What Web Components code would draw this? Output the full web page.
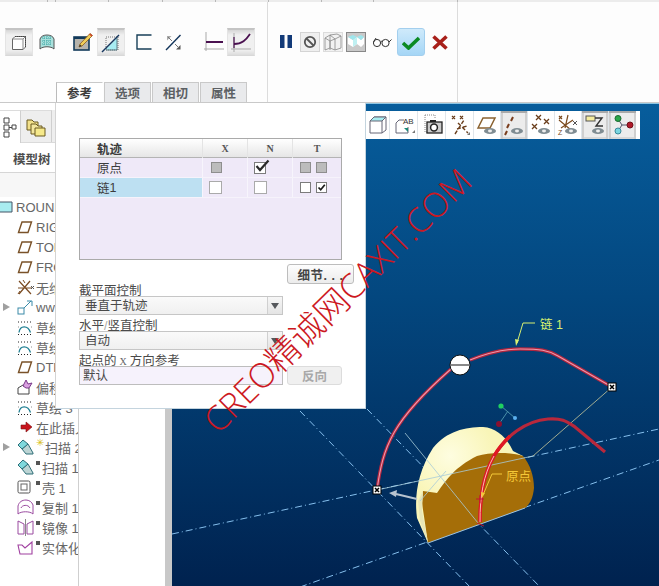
<!DOCTYPE html>
<html lang="zh">
<head>
<meta charset="utf-8">
<title>CAD</title>
<style>
  html, body { margin: 0; padding: 0; background: #fff; }
  body { width: 659px; height: 586px; overflow: hidden; font-family: "Liberation Sans", "Noto Sans CJK SC", sans-serif; }
</style>
</head>
<body>
<cad-app></cad-app>

<script>
"use strict";

const CJK = `"Liberation Sans", "Noto Sans CJK SC", sans-serif`;
const SERIF = `"Liberation Serif", "Noto Sans CJK SC", serif`;

// every element gets its markup and style from one template
function define(tag, css, html) {
  const template = document.createElement("template");
  template.innerHTML = `<style>${css}</style>${html}`;
  customElements.define(tag, class extends HTMLElement {
    constructor() {
      super();
      this.attachShadow({ mode: "open" });
      this.shadowRoot.appendChild(template.content.cloneNode(true));
    }
  });
}

function svg(w, h, body, style = "") {
  return `<svg width="${w}" height="${h}" viewBox="0 0 ${w} ${h}" style="display:block;${style}">${body}</svg>`;
}

/* ---------- small parts ---------- */

define("rib-btn", `
  :host { display: flex; align-items: center; justify-content: center; width: 28px; height: 28px; flex: none; box-sizing: border-box; }
  :host([active]) { background: linear-gradient(#d6d6d6, #f0f0f0 20%, #f0f0f0 80%, #dcdcdc); border-top: 2px solid #c4c4c4; border-left: 1px solid #e4e4e4; border-right: 1px solid #e4e4e4; border-bottom: 1px solid #d8d8d8; }
`, `<slot></slot>`);

define("tool-btn", `
  :host { display: flex; align-items: center; justify-content: center; width: 27px; height: 28px; box-sizing: border-box; border-right: 1px solid #dfe5ea; flex: none; }
  :host([active]) { background: #ececec; box-shadow: inset 0 2px 0 #aaa, inset 2px 0 0 #cfcfcf, inset -2px 0 0 #cfcfcf, inset 0 -2px 0 #d8d8d8; }
`, `<slot></slot>`);

define("cad-tab", `
  :host { display: flex; align-items: center; justify-content: center; width: 47px; height: 20px; box-sizing: border-box; margin-right: 1px; background: #e9eaec; border: 1px solid #c9c9c9; border-bottom: 0; font: bold 12.5px ${CJK}; color: #5c6064; }
  :host([active]) { background: #fff; color: #3c3c3c; border-left-color: #bbb; border-right-color: #fff; }
`, `<slot></slot>`);

define("tree-row", `
  :host { display: flex; align-items: center; height: 20px; white-space: nowrap; font: 13px ${CJK}; color: #666; }
  .gap { width: 10px; flex: none; }
  .icon { width: 17px; height: 18px; margin-left: 7px; margin-right: 2px; flex: none; display: flex; align-items: center; }
`, `<slot name="lead"><span class="gap"></span></slot><span class="icon"><slot name="icon"></slot></span><slot></slot>`);

define("cad-select", `
  :host { display: flex; width: 204px; height: 19px; box-sizing: border-box; border: 1px solid #c6c6c6; background: linear-gradient(#fafafa, #f0f0f0); font: 12.5px ${CJK}; color: #4a4a4a; line-height: 19px; }
  span { flex: 1; padding-left: 5px; height: 17px; }
  i { width: 14px; border-left: 1px solid #d0d0d0; display: flex; align-items: center; justify-content: center; background: linear-gradient(#f6f6f6, #e4e4e4); }
  i::after { content: ""; border: 4px solid transparent; border-top: 6px solid #55585c; border-bottom: 0; }
`, `<span><slot></slot></span><i></i>`);

define("cad-button", `
  :host { display: flex; align-items: center; justify-content: center; box-sizing: border-box; border: 1px solid #bdbdbd; border-radius: 3px; background: linear-gradient(#fdfdfd, #ececec); font: bold 12.5px ${CJK}; color: #444; }
  :host([disabled]) { border-color: #dcdcdc; background: #f0f0f0; color: #a8a8a8; }
`, `<slot></slot>`);

define("cad-check", `
  :host { display: block; width: 11px; height: 11px; box-sizing: border-box; border: 1px solid #7c7c7c; background: #fff; position: relative; flex: none; }
  :host([off]) { background: #bcbcbc; border-color: #8e8e8e; }
`, `<slot></slot>`);

const TICK = `<svg width="15" height="13" viewBox="0 0 15 13" style="position:absolute;left:0;top:-4px"><path d="M1.5 7 L5 11 L13.5 1.5" fill="none" stroke="#2a2a2a" stroke-width="2.2"/></svg>`;
const TINY_TICK = `<svg width="9" height="9" viewBox="0 0 9 9" style="position:absolute;left:0;top:0"><path d="M1.5 4.5 L3.7 6.8 L7.8 1.8" fill="none" stroke="#1a1a1a" stroke-width="1.7"/></svg>`;

/* ---------- ribbon ---------- */

define("ribbon-bar", `
  :host { display: flex; flex-direction: column; height: 103px; background: #fdfdfd; box-sizing: border-box; border-bottom: 1px solid #c9c9c9; }
  .strip { display: flex; height: 2px; background: #ececec; flex: none; }
  .strip b { display: block; border-right: 1px solid #b8b8b8; flex: none; }
  .groups { display: flex; flex: 1; }
  .g1 { width: 267px; border-right: 1px solid #dcdcdc; display: flex; flex-direction: column; }
  .g2 { width: 189px; border-right: 1px solid #dcdcdc; }
  .row { display: flex; align-items: center; height: 28px; margin-top: 26px; }
  .tabs { display: flex; margin-top: auto; margin-left: 56px; }
`, `
  <div class="strip"><b style="width:47px"></b><b style="width:7px"></b><b style="width:52px"></b><b style="width:53px"></b><b style="width:52px"></b><b style="width:52px"></b><b style="width:52px"></b><b style="width:51px"></b><b style="width:83px"></b></div>
  <div class="groups">
    <div class="g1">
      <div class="row">
        <rib-btn active style="margin-left:5px">${svg(16, 16, `<path d="M1.5 4 L4 1.5 H14.5 V12 L12 14.5 H1.5 Z" fill="#fff" stroke="#666" /><path d="M1.5 4 H12 V14.5 M12 4 L14.5 1.5" fill="none" stroke="#888"/><path d="M4 1.5 H14.5 V12" fill="none" stroke="#444" stroke-dasharray="1 1"/>`)}</rib-btn>
        <rib-btn style="margin-left:6px;width:16px">${svg(16, 17, `<path d="M1 15 V5 C2 2 5 1 8 1 C11 1 14 2 15 5 V15 C12 12 4 12 1 15 Z" fill="#a9e0dc" stroke="#555"/><path d="M3 4 H13 M3 7 H13 M3 10 H13 M5 2 V12 M8 2 V12 M11 2 V12" stroke="#3fa7a4" stroke-dasharray="1 1" fill="none"/>`)}</rib-btn>
        <rib-btn style="margin-left:14px;width:28px">${svg(21, 20, `<rect x="1" y="5" width="15" height="13" fill="#b7b4ac" stroke="#123a5a" stroke-width="1.6"/><rect x="1" y="5" width="15" height="2" fill="#123a5a"/><path d="M6 15 L7 12 L17 1.5 L19.5 3.5 L9 14 Z" fill="#f1cf5a" stroke="#8a5a1a" stroke-width=".8"/><path d="M16 2.5 L17 1.5 L19.5 3.5 L18.5 4.5 Z" fill="#d0402a"/><path d="M6 15 L7 12.6 L8.8 14 Z" fill="#333"/>`)}</rib-btn>
        <rib-btn active style="margin-left:0">${svg(20, 20, `<path d="M5 16 L16 5 V17 H5 Z" fill="#a8ecf2"/><path d="M5 4 H17 V17 H5 Z" fill="none" stroke="#777" stroke-dasharray="1 1"/><path d="M16 5 V17 H5" fill="none" stroke="#5a7a84"/><path d="M1 19 L18 2" stroke="#17375e" stroke-width="1.5"/>`)}</rib-btn>
        <rib-btn style="margin-left:11px;width:16px">${svg(16, 16, `<path d="M15.5 1 H1 V15 H15.5" fill="none" stroke="#173f58" stroke-width="1.4"/>`)}</rib-btn>
        <rib-btn style="margin-left:13px;width:17px">${svg(17, 17, `<path d="M1 16 L15.5 1" stroke="#12345a" stroke-width="1.4"/><path d="M2 2 L6.5 2 L2 6.5 Z" fill="#aaa"/><path d="M15.5 15.5 L11 15.5 L15.5 11 Z" fill="#555"/><path d="M3 3 L7 7 M14 14 L10 10" stroke="#777"/>`)}</rib-btn>
        <rib-btn style="margin-left:21px;width:22px">${svg(20, 20, `<path d="M2 0 V19 M0 17 H20" stroke="#a9a9a9" fill="none"/><path d="M2 10 H19" stroke="#4a1150" stroke-width="2"/>`)}</rib-btn>
        <rib-btn active style="margin-left:2px">${svg(20, 20, `<path d="M3 0 V19 M0 16 H20" stroke="#a9a9a9" fill="none"/><path d="M3 11 C11 11 15 7 19 1" fill="none" stroke="#4a1150" stroke-width="1.8"/><path d="M3 4 V15" stroke="#4a1150" stroke-width="1.2"/>`)}</rib-btn>
      </div>
      <div class="tabs">
        <cad-tab active>参考</cad-tab><cad-tab>选项</cad-tab><cad-tab>相切</cad-tab><cad-tab>属性</cad-tab>
      </div>
    </div>
    <div class="g2">
      <div class="row">
        <rib-btn style="margin-left:11px;width:13px">${svg(12, 14, `<rect x="0" y="0" width="4.5" height="13" fill="#123a78"/><rect x="7.5" y="0" width="4.5" height="13" fill="#123a78"/>`)}</rib-btn>
        <rib-btn style="margin-left:8px;width:20px;height:20px;background:#efefef;border:1px solid #d4d4d4">${svg(14, 14, `<circle cx="7" cy="7" r="5.2" fill="none" stroke="#555" stroke-width="1.8"/><path d="M3.5 3.5 L10.5 10.5" stroke="#555" stroke-width="1.8"/>`)}</rib-btn>
        <rib-btn style="margin-left:3px;width:20px;height:20px;background:#f2f2f2;border:1px solid #dcdcdc">${svg(18, 18, `<path d="M1 5 L6 2 V15 L1 17 Z M6 2 L11 6 V17 L6 15 M11 6 L17 3 V15 L11 17 M1 5 L6 8 V17 M6 8 L11 6 M6 2 L13 1 L17 3" fill="none" stroke="#888" stroke-width=".8"/>`)}</rib-btn>
        <rib-btn style="margin-left:3px;width:20px;height:20px;background:#c9c9c9;border:1px solid #888">${svg(18, 18, `<path d="M1 4 L6 7 V14 L1 11 Z M6 7 L10 4 L14 7 V14 L10 11 L6 14 Z M14 7 L17 4 V11 L14 14 Z" fill="#fff"/><path d="M1 4 L6 7 L10 4 L14 7 L17 4 L14 2 L10 4 L6 2 Z" fill="#9fe6ec"/><path d="M6 7 L6 14 L10 11 V4 Z" fill="#bff0f2"/>`)}</rib-btn>
        <rib-btn style="margin-left:6px;width:20px">${svg(20, 11, `<ellipse cx="5" cy="6" rx="3.6" ry="3.6" fill="#fff" stroke="#333"/><ellipse cx="13.5" cy="6" rx="3.6" ry="3.6" fill="#fff" stroke="#333"/><path d="M8.5 5 C9.5 4 9.8 4 10 5 M17 5 L19.5 2.5 M1.6 5 L4 1" fill="none" stroke="#333"/>`)}</rib-btn>
        <rib-btn style="margin-left:5px;background:linear-gradient(#cfeafb,#a5d6f6);border:1px solid #a3cfee;border-radius:3px">${svg(18, 15, `<path d="M1 8 L6.5 13 L17 3" fill="none" stroke="#0b8a22" stroke-width="3.6"/>`)}</rib-btn>
        <rib-btn style="margin-left:7px;width:16px">${svg(16, 15, `<path d="M1.5 1.5 L14.5 13.5 M14.5 1.5 L1.5 13.5" stroke="#a8201a" stroke-width="3.6"/>`)}</rib-btn>
      </div>
    </div>
  </div>
`);

/* ---------- model tree ---------- */

const PLANE = svg(16, 14, `<path d="M1.5 12.5 L5 2 H14.5 L11 12.5 Z" fill="none" stroke="#7a5228" stroke-width="1.4"/>`);
const SKETCH = svg(16, 15, `<path d="M2 12.5 C3 5 11 5 13.5 12.5" fill="none" stroke="#1f7f92" stroke-width="1.3"/><path d="M1 2 H14 M1 7 H1.5 M14 7 H14.5" stroke="#222" stroke-dasharray="1 2" fill="none"/><path d="M1 14.5 H14" stroke="#222" stroke-dasharray="1 2"/>`);
const SWEEP = svg(17, 16, `<path d="M5 10 L11 5 L16 14 V15 L9 15 Z" fill="#bcd4d4" stroke="#2f6f78"/><path d="M1 6 L6 1 L11 5 L5 10 Z" fill="#7ed8dc" stroke="#2f6f78"/>`);
const MARK = `<i style="display:block;flex:none;width:4px;height:4px;background:#555;margin:0 2px 8px 0"></i>`;

define("model-tree", `
  :host { display: flex; flex-direction: column; width: 79px; box-sizing: border-box; flex: none; overflow: hidden; background: #fff; border-right: 1px solid #cfcfcf; }
  .tabs { display: flex; height: 40px; box-sizing: border-box; padding-top: 7px; border-bottom: 1px solid #dadada; }
  .tabs div { display: flex; align-items: center; justify-content: center; box-sizing: border-box; }
  .t1 { width: 21px; margin-bottom: -1px; background: #fff; border-right: 1px solid #cfcfcf; border-top: 1px solid #dcdcdc; }
  .t2 { width: 31px; background: #eee; border-right: 1px solid #cfcfcf; border-top: 1px solid #dcdcdc; }
  .t3 { width: 24px; background: #eee; }
  .title { height: 30px; display: flex; align-items: center; padding: 2px 0 0 13px; box-sizing: border-box; font: bold 12.5px ${CJK}; color: #4c4c4c; border-bottom: 1px solid #d6d6d6; }
  .blank { height: 24px; flex: none; background: #f7f7f7; }
  .arrow { display: block; flex: none; width: 0; height: 0; border: 4px solid transparent; border-left: 7px solid #a0a0a0; border-right: 0; margin: 0 0 0 3px; }
`, `
  <div class="tabs">
    <div class="t1">${svg(16, 22, `<path d="M2 2 H7 V7 H2 Z M2 9 H7 V14 H2 Z M2 16 H7 V21 H2 Z M10 9 H14 V13 H10 Z M7 11.5 H10" fill="#fff" stroke="#444"/>`)}</div>
    <div class="t2">${svg(20, 20, `<path d="M1 3 H6 L8 5 H12 V13 H1 Z" fill="#f2e08a" stroke="#6a5a20"/><path d="M5 7 H10 L12 9 H16 V17 H5 Z" fill="#f3e69e" stroke="#6a5a20"/><path d="M9 11 H19 V19 H9 Z" fill="#f6e98a" stroke="#6a5a20"/>`)}</div>
    <div class="t3"></div>
  </div>
  <div class="title">模型树</div>
  <div class="blank"></div>
  <tree-row style="margin-left:-20px"><span slot="icon">${svg(16, 12, `<path d="M1 1 H15 V11 H1 Z" fill="#a8ecf0" stroke="#456"/>`)}</span>ROUND1</tree-row>
  <tree-row><span slot="icon">${PLANE}</span>RIGHT</tree-row>
  <tree-row><span slot="icon">${PLANE}</span>TOP</tree-row>
  <tree-row><span slot="icon">${PLANE}</span>FRONT</tree-row>
  <tree-row><span slot="icon">${svg(17, 17, `<path d="M2 2 L14 15 M13 2 L2 15 M1 9 H15" stroke="#7a4a20" stroke-width="1.2"/><path d="M6 1 L8 4 M3 12 L1 15" stroke="#7a4a20"/><path d="M14 7 L17 10 M17 7 L14 10" stroke="#555"/>`)}</span>无维度</tree-row>
  <tree-row><span slot="lead" class="arrow"></span><span slot="icon">${svg(17, 15, `<rect x="1" y="8" width="6" height="6" fill="#fff" stroke="#3a8aa8"/><path d="M7 8 L14 1 M10 1 H15 V6" fill="none" stroke="#3a8aa8"/>`)}</span>wwv</tree-row>
  <tree-row><span slot="icon">${SKETCH}</span>草绘 1</tree-row>
  <tree-row><span slot="icon">${SKETCH}</span>草绘 2</tree-row>
  <tree-row><span slot="icon">${PLANE}</span>DTM1</tree-row>
  <tree-row><span slot="icon">${svg(17, 17, `<path d="M1 9 L6 6 L12 9 V15 H1 Z" fill="#fff" stroke="#444"/><path d="M6 7 L9 1 L11 5 L15 4 L12 9 L9 9 Z" fill="#d9a0e0" stroke="#7a3a8a"/>`)}</span>偏移 1</tree-row>
  <tree-row><span slot="icon">${SKETCH}</span>草绘 3</tree-row>
  <tree-row><span slot="icon">${svg(16, 12, `<path d="M4 4 H9 V1 L15 6 L9 11 V8 H4 Z" fill="#c8141c" stroke="#7a1010" stroke-width=".6"/>`)}</span>在此插入</tree-row>
  <tree-row><span slot="lead" class="arrow"></span><span slot="icon">${SWEEP}</span><span style="flex:none;color:#d8c020;font-size:10px;line-height:10px;margin:0 1px 8px 0">✳</span>扫描 2</tree-row>
  <tree-row><span slot="icon">${SWEEP}</span>${MARK}扫描 1</tree-row>
  <tree-row><span slot="icon">${svg(14, 14, `<rect x="1" y="1" width="12" height="12" rx="1.5" fill="#fff" stroke="#555"/><rect x="4" y="4" width="6" height="6" fill="#fff" stroke="#666"/>`)}</span>${MARK}壳 1</tree-row>
  <tree-row><span slot="icon">${svg(17, 17, `<path d="M1 15 V7 C2 3 5 1 9 1 C12 1 15 3 16 6 V15 C13 12 4 12 1 15 Z" fill="#fff" stroke="#9a4aa0"/><path d="M4 9 C5 6 11 5 13 9" fill="none" stroke="#9a4aa0"/>`)}</span>${MARK}复制 1</tree-row>
  <tree-row><span slot="icon">${svg(17, 17, `<path d="M1 2 L7 5 V15 H1 Z M16 2 L10 5 V15 H16 Z" fill="#fff" stroke="#9a4aa0"/><path d="M8.5 0 V17" stroke="#8a8a8a"/>`)}</span>${MARK}镜像 1</tree-row>
  <tree-row><span slot="icon">${svg(17, 15, `<path d="M1 5 L5 5 L8 8 L15 2 V14 H3 Z" fill="#fff" stroke="#a040a0" stroke-width="1.1"/>`)}</span>${MARK}实体化</tree-row>
`);

/* ---------- dialog ---------- */

define("traj-table", `
  :host { display: block; width: 263px; height: 122px; box-sizing: border-box; border: 1px solid #aaa; background: #efe9f8; font: 12.5px ${CJK}; color: #3c3c3c; }
  .row { display: grid; grid-template-columns: 123px 45px 45px 1fr; height: 20px; box-sizing: border-box; border-bottom: 1px solid #f6f3fb; align-items: center; }
  .row > div { height: 100%; display: flex; align-items: center; box-sizing: border-box; border-right: 1px solid #f7f5fc; }
  .row > div:last-child { border-right: 0; }
  .head { height: 19px; background: linear-gradient(#fff, #e6e6e6); border-bottom: 1px solid #b4b4b4; font-weight: bold; }
  .head > div { border-right-color: #e4e4e4; }
  .head .n { font: bold 10px ${SERIF}; color: #555; justify-content: center; }
  .first { padding-left: 17px; }
  .c { padding-left: 6px; gap: 5px; }
  .sel { background: #bde0f2; }
`, `
  <div class="row head"><div class="first">轨迹</div><div class="n">X</div><div class="n">N</div><div class="n">T</div></div>
  <div class="row">
    <div class="first">原点</div>
    <div class="c" style="padding-left:8px"><cad-check off></cad-check></div>
    <div class="c"><cad-check style="width:12px;height:12px">${TICK}</cad-check></div>
    <div class="c" style="padding-left:7px"><cad-check off></cad-check><cad-check off></cad-check></div>
  </div>
  <div class="row">
    <div class="first sel">链<span style="font:10px ${SERIF};margin-left:9px;color:#567">1</span></div>
    <div class="c"><cad-check style="width:13px;height:13px;border-color:#aaa"></cad-check></div>
    <div class="c"><cad-check style="width:13px;height:13px;border-color:#aaa"></cad-check></div>
    <div class="c" style="padding-left:7px"><cad-check></cad-check><cad-check>${TINY_TICK}</cad-check></div>
  </div>
`);

define("sweep-dialog", `
  :host { display: block; width: 311px; height: 306px; box-sizing: border-box; background: #fff; border-right: 1px solid #c4d4de; border-bottom: 1px solid #c4d4de; border-left: 1px solid #d4d4d4; padding: 35px 0 0 23px; font: 12.5px ${CJK}; color: #4a4a4a; }
  .btn-row { display: flex; height: 20px; margin-top: 4px; margin-bottom: -4px; padding-left: 208px; }
  .lab { height: 13px; line-height: 16px; white-space: nowrap; margin-top: 3px; }
  .n { font: 10px ${SERIF}; color: #666; margin: 0 3px; }
  .lt { color: #aaa; }
  .line { display: flex; gap: 4px; }
  .input { width: 204px; height: 19px; box-sizing: border-box; border: 1px solid #bdbdbd; background: #f6f2fc; padding-left: 3px; line-height: 19px; }
`, `
  <traj-table></traj-table>
  <div class="btn-row"><cad-button style="width:67px;letter-spacing:.5px">细节. . .</cad-button></div>
  <div class="lab">截平面控制</div>
  <cad-select>垂直于轨迹</cad-select>
  <div class="lab">水平<span class="lt">/</span>竖直控制</div>
  <cad-select>自动</cad-select>
  <div class="lab">起点的<span class="n">X</span>方向参考</div>
  <div class="line"><div class="input">默认</div><cad-button disabled style="width:55px;height:19px">反向</cad-button></div>
`);

/* ---------- view toolbar ---------- */

const EYE = `<ellipse cx="14" cy="17" rx="6" ry="3" fill="#7f8c92"/><ellipse cx="14" cy="17" rx="2" ry="1.4" fill="#eee"/>`;

define("view-toolbar", `
  :host { display: flex; width: 274px; height: 28px; background: #fff; box-sizing: border-box; padding-right: 4px; }
`, `
  <tool-btn style="width:24px">${svg(20, 20, `<path d="M2 6 L6 2 H18 V15 L14 18 H2 Z" fill="#fff" stroke="#667"/><path d="M2 6 L6 2 H18 L14 6 Z" fill="#a8ecf0" stroke="#667"/><path d="M14 6 V18 M14 6 L18 2" stroke="#667" fill="none"/>`)}</tool-btn>
  <tool-btn style="width:28px">${svg(22, 20, `<path d="M3 8 L6 5 H11 M3 8 V18 H15 V12" fill="none" stroke="#667"/><text x="10" y="9" font-size="8" font-family="Liberation Sans" fill="#333">AB</text><path d="M11 13 H15 V17 Z" fill="#1c8a78"/><path d="M19 18 H22 V15 Z" fill="#777"/>`)}</tool-btn>
  <tool-btn style="width:28px">${svg(22, 22, `<path d="M4 1 H14 V4 M4 1 V18 H6" fill="none" stroke="#888" stroke-dasharray="1 1"/><rect x="6" y="8" width="15" height="11" fill="#ccc" stroke="#222" stroke-width="1.3"/><rect x="9" y="6" width="6" height="2" fill="#222"/><circle cx="13" cy="13.5" r="3.4" fill="#fff" stroke="#222" stroke-width="1.5"/>`)}</tool-btn>
  <tool-btn style="width:28px">${svg(20, 22, `<path d="M2 2 L5 5 M5 2 L2 5 M10 2 L13 5 M13 2 L10 5" stroke="#6a3e1c" stroke-width="1.2"/><path d="M5 20 L14 6 M8 9 L18 19 M7 15 L17 12" stroke="#6a3e1c" stroke-width="1.4" stroke-dasharray="4 2"/><path d="M17 21 H20 V18 Z" fill="#777"/>`)}</tool-btn>
  <tool-btn style="width:27px">${svg(22, 22, `<path d="M2 14 L7 4 H19 L14 14 Z" fill="none" stroke="#8a6230" stroke-width="1.5"/>${EYE}`)}</tool-btn>
  <tool-btn active style="width:27px">${svg(22, 22, `<path d="M10 3 L8 7 M6 10 L4 14 M4 17 L2 21" stroke="#7a3e1e" stroke-width="2"/>${EYE}`)}</tool-btn>
  <tool-btn style="width:27px">${svg(22, 22, `<path d="M6 1 L11 6 M11 1 L6 6 M14 5 L19 10 M19 5 L14 10 M2 10 L7 15 M7 10 L2 15" stroke="#6a3e1c" stroke-width="1.3"/>${EYE}`)}</tool-btn>
  <tool-btn style="width:27px">${svg(22, 22, `<path d="M2 2 L5 5 M5 2 L2 5 M2 6 L14 16 M4 14 L16 6 M11 1 L8 14" stroke="#7a4a1e" stroke-width="1.2"/><path d="M16 7 L20 11 M20 7 L16 11" stroke="#555"/><text x="1" y="21" font-size="7" font-family="Liberation Sans" fill="#7a4a1e">Z</text>${EYE}`)}</tool-btn>
  <tool-btn active style="width:27px">${svg(22, 22, `<rect x="2" y="2" width="9" height="5" fill="#f5ec9e" stroke="#555"/><path d="M11 4 H18 L12 12 H19" fill="none" stroke="#333" stroke-width="1.4"/>${EYE}`)}</tool-btn>
  <tool-btn active style="width:27px;border-right:0">${svg(22, 22, `<path d="M6 5 L10 11 L6 17 M10 11 H17" fill="none" stroke="#556"/><circle cx="6" cy="4.5" r="3" fill="#2aa84a" stroke="#1a6a30"/><circle cx="6" cy="17" r="3" fill="#7ad6e0" stroke="#3a8a9a"/><circle cx="18" cy="11" r="3" fill="#b01a2a" stroke="#701018"/>`)}</tool-btn>
`);

/* ---------- 3d view ---------- */

define("view-port", `
  :host { display: block; flex: 1; height: 100%; position: relative; background: linear-gradient(#075d9c, #03477f 40%, #00224f); border-top: 1px solid #8ec6e4; box-sizing: border-box; padding: 7px 0 0 194px; overflow: hidden; }
  svg.scene { position: absolute; left: 0; top: 0; }
  view-toolbar { position: relative; }
  text { font-family: ${CJK}; font-size: 12.5px; }
`, `
  <svg class="scene" width="487" height="483" viewBox="172 103 487 483">
    <defs>
      <radialGradient id="dome" gradientUnits="userSpaceOnUse" cx="450" cy="455" r="45">
        <stop offset="0" stop-color="#fefde0"/>
        <stop offset="1" stop-color="#f9f5b8"/>
      </radialGradient>
    </defs>
    <g fill="none" stroke="#86c0ee" stroke-width="1" stroke-dasharray="7 3 1 3">
      <path d="M172 533 L659 428"/>
      <path d="M300 586 L659 459"/>
      <path d="M300 410 L470 586"/>
      <path d="M367 408 L540 586"/>
    </g>
    <path d="M428 542 L417 517 C414 495 418 470 433 447 C447 430 465 426 483 426 C497 427 507 437 513 450 L523 455 L450 492 L437 492 L428 500 Z" fill="url(#dome)"/>
    <path d="M428 542 L422 502 L423 490 L437 492 C447 478 455 466 477 455 C490 451 510 451 523 455 C530 463 534 475 534 487 C533 497 530 503 525 507 Z" fill="#a56e08"/>
    <path d="M428 542 L420 520 L418 500 L423 490 L422 510 Z" fill="#e8e6b8"/>
    <path d="M428 542 L525 507" stroke="#9cc4e4" stroke-width="1" fill="none"/>
    <path d="M533 455 L612 386" fill="none" stroke="#c8c89a" stroke-width=".8"/>
    <path d="M533 455 L377 489 M405 432 L478 522 M420 500 L446 470" fill="none" stroke="#a8ccd8" stroke-width=".8"/>
    <path d="M377 489 C383 445 392 420 451 368 M470 359 C490 351 505 348 520 348 C540 348 548 349 558 355 L612 386" fill="none" stroke="#b0263f" stroke-width="3.4"/>
    <path d="M377 489 C383 445 392 420 451 368 M470 359 C490 351 505 348 520 348 C540 348 548 349 558 355 L612 386" fill="none" stroke="#ee9aac" stroke-width="1.1"/>
    <path d="M480 521 C480 495 483 475 494 455 C506 435 525 420 548 418 C562 417 566 420 575 426 L605 451" fill="none" stroke="#b8283c" stroke-width="3.2"/>
    <path d="M480 521 C480 495 483 475 494 455 C499 446 505 440 510 435" fill="none" stroke="#e01824" stroke-width="3.4"/>
    <path d="M480 521 C480 495 483 475 494 455" fill="none" stroke="#f8c0b0" stroke-width="1"/>
    <path d="M476 498 H484 M480 494 V502 M477 522 L484 525" stroke="#c01830" fill="none"/>
    <path d="M417 498 L396 493" stroke="#b8c4d0" stroke-width="2"/>
    <path d="M389 492 L397 489 L396 496 Z" fill="#b8c4d0"/>
    <path d="M501 405 L515 417 M508 410 L499 423" stroke="#4a90a8" stroke-width="1"/>
    <circle cx="501" cy="405" r="2.6" fill="#1fd060"/>
    <circle cx="515" cy="417" r="2" fill="#5ab0f0"/>
    <circle cx="499" cy="423" r="3" fill="#8a1030"/>
    <circle cx="460" cy="364" r="10" fill="#fff" stroke="#111"/>
    <path d="M451 364 H469" stroke="#888" stroke-width="2"/>
    <g stroke="#000">
      <rect x="373" y="485" width="8" height="8" fill="#fff"/>
      <rect x="608" y="382" width="8" height="8" fill="#fff"/>
      <path d="M375 487 L379 491 M379 487 L375 491 M610 384 L614 388 M614 384 L610 388" stroke-width="1.5"/>
    </g>
    <path d="M535 322 H523 L517 342" fill="none" stroke="#d8f070"/>
    <path d="M515 338 L519 339 L516 345 Z" fill="#d8f070"/>
    <text x="540" y="328" fill="#d8f070">链 1</text>
    <path d="M502 473 H492 L483 494" fill="none" stroke="#f4c838"/>
    <path d="M481 491 L485 492 L482 497 Z" fill="#f4c838"/>
    <text x="506" y="480" fill="#f4c838">原点</text>
  </svg>
  <view-toolbar></view-toolbar>
`);

/* ---------- page ---------- */

define("cad-app", `
  :host { display: flex; flex-direction: column; width: 659px; height: 586px; position: relative; overflow: hidden; background: #fff; }
  .main { display: flex; flex: 1; position: relative; min-height: 0; }
  .side { width: 86px; flex: none; background: #fff; }
  .bar { width: 7px; flex: none; background: #c8c8c8; }
  sweep-dialog { position: absolute; left: 55px; top: 0; }
  .mark { position: absolute; left: 336px; top: 299px; transform: translate(-50%, -50%) rotate(-44.5deg); white-space: nowrap; font: 300 34px "Open Sans", "Noto Sans CJK SC", sans-serif; color: #cc1822; }
`, `
  <ribbon-bar></ribbon-bar>
  <div class="main">
    <model-tree></model-tree>
    <div class="side"></div>
    <div class="bar"></div>
    <view-port></view-port>
    <sweep-dialog></sweep-dialog>
  </div>
  <div class="mark">CREO精诚网CAXIT.COM</div>
`);
</script>
</body>
</html>
